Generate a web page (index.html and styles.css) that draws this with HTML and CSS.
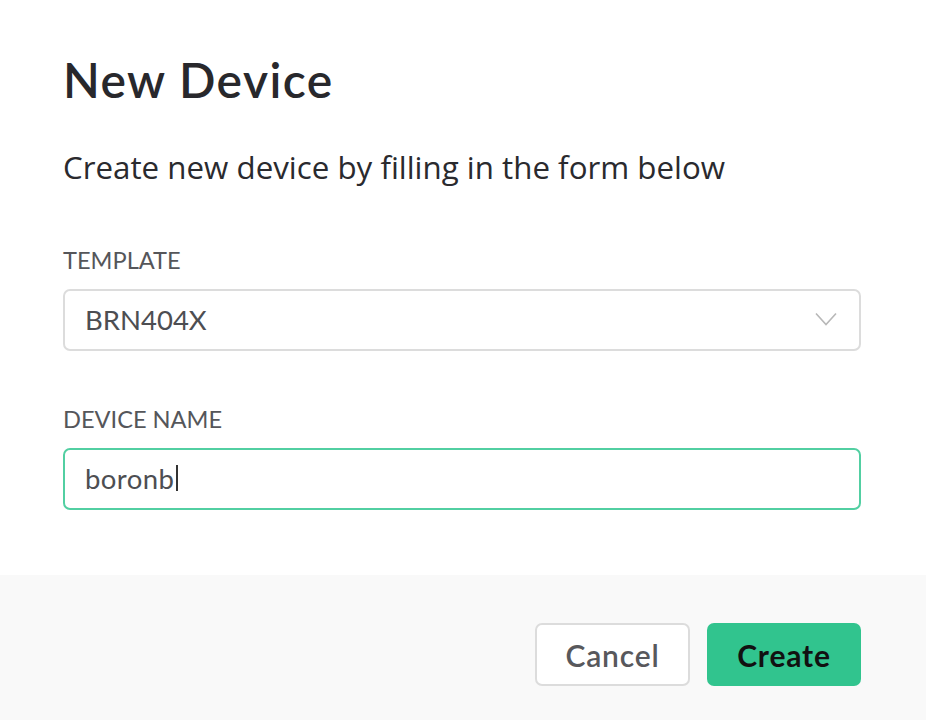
FILE: index.html
```html
<!DOCTYPE html>
<html lang="en">
<head>
<meta charset="utf-8">
<title>New Device</title>
<link rel="stylesheet" href="styles.css">
</head>
<body>
<div class="modal">
  <div class="modal-body">
    <h1 class="title">New Device</h1>
    <p class="subtitle">Create new device by filling in the form below</p>
    <div class="field">
      <div class="label">TEMPLATE</div>
      <div class="select">
        <span class="value">BRN404X</span>
        <svg class="chevron" width="22" height="14" viewBox="0 0 22 14"><path d="M1 1.5 L11 12.5 L21 1.5" fill="none" stroke="#b8b8b8" stroke-width="1.6"/></svg>
      </div>
    </div>
    <div class="field field-2">
      <div class="label">DEVICE NAME</div>
      <div class="input"><span class="value">boronb</span><span class="caret"></span></div>
    </div>
  </div>
  <div class="modal-footer">
    <button class="btn btn-cancel">Cancel</button>
    <button class="btn btn-create">Create</button>
  </div>
</div>
</body>
</html>
```
FILE: styles.css
```css
html, body { margin: 0; padding: 0; background: #ffffff; }
.modal { width: 926px; height: 720px; display: flex; flex-direction: column; }
.modal-body { height: 575px; box-sizing: border-box; padding: 52px 65px 0 63px; }
.title {
  margin: 0;
  font-family: "Lato", sans-serif;
  font-weight: 600;
  font-size: 48px;
  line-height: 56px;
  color: #28282c;
  letter-spacing: 1.4px;
}
.subtitle {
  margin: 39px 0 0;
  font-family: "Open Sans", sans-serif;
  font-size: 31.3px;
  line-height: 40px;
  color: #2a2a2e;
}
.field { margin-top: 58px; }
.field-2 { margin-top: 53px; }
.label {
  font-family: "Lato", sans-serif;
  font-size: 23.6px;
  line-height: 30px;
  color: #55565a;
  margin-bottom: 14px;
}
.select, .input {
  height: 62px;
  box-sizing: border-box;
  border: 2px solid #dcdcdc;
  border-radius: 7px;
  display: flex;
  align-items: center;
  padding: 0 22px 2px 20px;
  font-family: "Lato", sans-serif;
  font-size: 27.5px;
  color: #4d4e52;
}
.select { justify-content: space-between; }
.input { border-color: #52cfa2; }
.input .value { letter-spacing: 0.4px; }
.caret { display: inline-block; width: 2px; height: 26px; background: #333; margin-left: 2px; }
.modal-footer {
  flex: 1;
  background: #f9f9f9;
  display: flex;
  justify-content: flex-end;
  align-items: flex-start;
  padding: 48px 65px 0 0;
  gap: 17px;
}
.btn {
  height: 63px;
  box-sizing: border-box;
  border-radius: 7px;
  font-family: "Lato", sans-serif;
  font-size: 30px;
  font-weight: 600;
  letter-spacing: 0.8px;
  cursor: pointer;
}
.btn-cancel { width: 155px; background: #fff; border: 2px solid #dcdcdc; color: #58585c; }
.btn-create { width: 154px; background: #31c48e; border: none; color: #111; font-weight: 700; }
```
